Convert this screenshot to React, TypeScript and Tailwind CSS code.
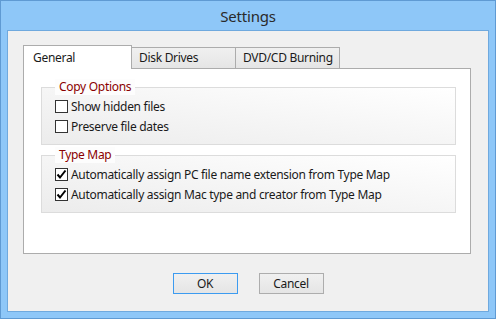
import React from "react";

const font = { fontFamily: '"Noto Sans", "Segoe UI", sans-serif' };

const Check = ({ checked }: { checked?: boolean }) => (
  <span className="flex h-[13px] w-[13px] shrink-0 items-center justify-center border border-[#333333] bg-white">
    {checked && (
      <svg width="11" height="11" viewBox="0 0 11 11">
        <path d="M1.5 5.5 L4 8.5 L9.5 1.5" fill="none" stroke="#000" strokeWidth="2" />
      </svg>
    )}
  </span>
);

const Row = ({ label, checked }: { label: string; checked?: boolean }) => (
  <div className="flex h-[13px] items-center gap-[3px] pl-[13px]">
    <Check checked={checked} />
    <span className="whitespace-nowrap leading-[13px]">{label}</span>
  </div>
);

const Group = ({ title, children }: { title: string; children: React.ReactNode }) => (
  <div className="relative flex flex-col gap-[7px] border border-[#dcdcdc] bg-linear-to-bl from-white to-[#ececec] pt-[12px] pb-[11px]">
    <span className="absolute -top-[9px] left-[13px] bg-[#fdfdfd] px-[4px] leading-[16px] text-[#8b0000]">
      {title}
    </span>
    {children}
  </div>
);

export default function App() {
  return (
    <div
      className="flex h-[319px] w-[496px] flex-col border border-[#5f9ad3] bg-[#8ec7f8] text-[12px] tracking-[-0.3px] text-[#1a1a1a]"
      style={font}
    >
      <div className="flex h-[29px] items-center justify-center pt-[2px] text-[15px] tracking-[-0.2px] text-[#2a2a2a]">
        Settings
      </div>
      <div className="mx-[6px] flex h-[282px] flex-col border border-[#6fa9de] bg-[#f0f0f0] pt-[14px] pl-[15px]">
        <div className="flex h-[23px] items-end">
          <div className="relative z-10 -mb-px flex h-[24px] w-[109px] items-start border border-b-0 border-[#acacac] bg-white pt-[3px] pl-[9px]">
            General
          </div>
          <div className="-ml-px flex h-[21px] w-[105px] items-center border border-b-0 border-[#acacac] bg-linear-to-b from-[#f0f0f0] to-[#e5e5e5] pl-[7px]">
            Disk Drives
          </div>
          <div className="-ml-px flex h-[21px] w-[105px] items-center border border-b-0 border-[#acacac] bg-linear-to-b from-[#f0f0f0] to-[#e5e5e5] pl-[7px]">
            DVD/CD Burning
          </div>
        </div>
        <div className="flex h-[186px] w-[448px] flex-col gap-[10px] border border-[#acacac] bg-white pt-[18px] pr-[14px] pl-[17px]">
          <Group title="Copy Options">
            <Row label="Show hidden files" />
            <Row label="Preserve file dates" />
          </Group>
          <Group title="Type Map">
            <Row label="Automatically assign PC file name extension from Type Map" checked />
            <Row label="Automatically assign Mac type and creator from Type Map" checked />
          </Group>
        </div>
        <div className="flex justify-center gap-[21px] pt-[19px] pr-[15px]">
          <button className="h-[21px] w-[65px] border border-[#3c9bf0] bg-linear-to-b from-[#f0f0f0] to-[#e5e5e5] text-[12px]">
            OK
          </button>
          <button className="h-[21px] w-[65px] border border-[#adadad] bg-linear-to-b from-[#f0f0f0] to-[#e5e5e5] text-[12px]">
            Cancel
          </button>
        </div>
      </div>
    </div>
  );
}
